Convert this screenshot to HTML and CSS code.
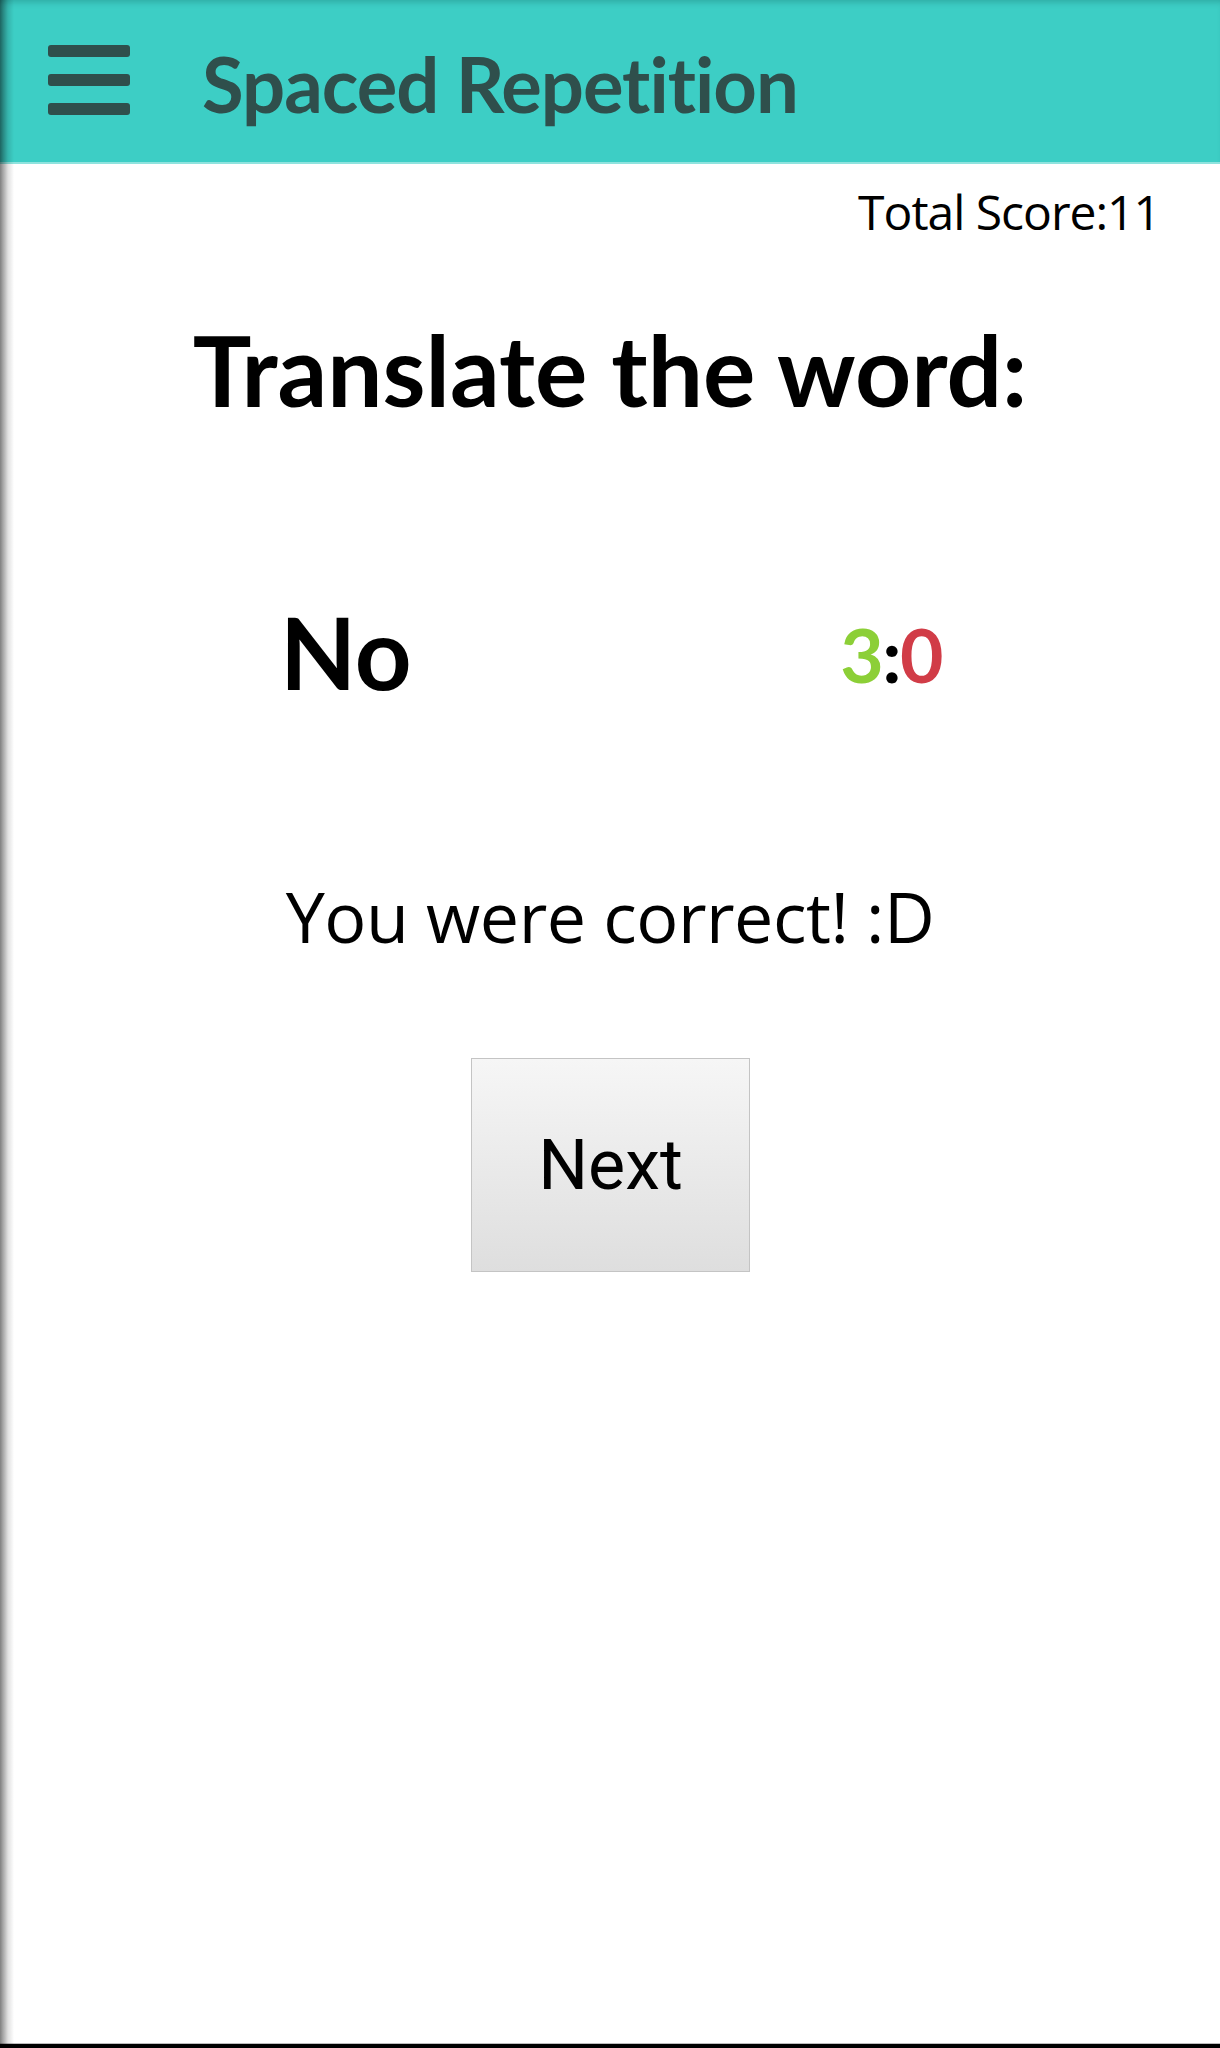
FILE: index.html
```html
<!DOCTYPE html>
<html lang="en">
<head>
<meta charset="utf-8">
<title>Spaced Repetition</title>
<link rel="stylesheet" href="styles.css">
</head>
<body>
<div class="app">
  <header class="topbar">
    <div class="menu-btn" aria-label="Menu">
      <span class="bar"></span>
      <span class="bar"></span>
      <span class="bar"></span>
    </div>
    <h1 class="app-title">Spaced Repetition</h1>
  </header>
  <main class="content">
    <div class="score-row"><span class="total-score">Total Score:11</span></div>
    <h2 class="prompt">Translate the word:</h2>
    <div class="word-row">
      <span class="word">No</span>
      <span class="tally"><span class="tally-good">3</span>:<span class="tally-bad">0</span></span>
    </div>
    <p class="feedback">You were correct! :D</p>
    <div class="actions">
      <button class="next-btn" type="button">Next</button>
    </div>
  </main>
  <div class="bottom-edge"></div>
  <div class="left-shadow"></div>
</div>
</body>
</html>
```

FILE: styles.css
```css
html, body {
  margin: 0;
  padding: 0;
  background: #ffffff;
}

body {
  font-family: "Open Sans", "Noto Sans", "DejaVu Sans", sans-serif;
  color: #000;
}

.app {
  position: relative;
  width: 1220px;
  height: 2048px;
  display: flex;
  flex-direction: column;
  overflow: hidden;
}

.topbar {
  flex: 0 0 auto;
  height: 162px;
  background: #3dcec5;
  border-bottom: 2px solid #8fe3de;
  box-sizing: content-box;
  display: flex;
  align-items: center;
  box-shadow: inset 0 6px 6px -4px rgba(0, 60, 60, 0.25);
}

.menu-btn {
  margin-left: 48px;
  width: 82px;
  display: flex;
  flex-direction: column;
  gap: 17px;
  margin-top: -2px;
}

.bar {
  display: block;
  height: 12px;
  border-radius: 3px;
  background: #2f4f4c;
}

.app-title,
.prompt,
.word,
.tally {
  font-family: Lato, "Open Sans", sans-serif;
  font-weight: 700;
}

.app-title {
  margin: 6px 0 0 72px;
  font-size: 76px;
  line-height: 1;
  letter-spacing: -1px;
  color: #2f4f4c;
}

.content {
  flex: 1 1 auto;
  display: flex;
  flex-direction: column;
}

.score-row {
  display: flex;
  justify-content: flex-end;
  padding: 24px 60px 0 0;
}

.total-score {
  font-size: 48px;
  line-height: 1;
  letter-spacing: -1px;
}

.prompt {
  margin: 84px 0 0 0;
  text-align: center;
  font-size: 98px;
  line-height: 1;
}

.word-row {
  display: flex;
  justify-content: space-between;
  align-items: flex-start;
  padding: 0 278px 0 280px;
  margin-top: 184px;
}

.word {
  font-size: 99px;
  line-height: 1;
}

.tally {
  margin-top: 15px;
  font-size: 75px;
  line-height: 1;
  letter-spacing: -1.5px;
}

.tally-good {
  color: #8ccf37;
}

.tally-bad {
  color: #d13c47;
}

.feedback {
  margin: 180px 0 0 0;
  text-align: center;
  font-size: 70px;
  line-height: 1;
  letter-spacing: -0.5px;
}

.actions {
  display: flex;
  justify-content: center;
  margin-top: 107px;
}

.next-btn {
  width: 279px;
  height: 214px;
  margin-left: 1px;
  border: 1.5px solid #c4c4c4;
  border-radius: 0;
  background: linear-gradient(to bottom, #f6f6f6, #dedede);
  font-family: Roboto, "Noto Sans", sans-serif;
  font-size: 70px;
  color: #000;
  padding: 0;
  display: flex;
  align-items: center;
  justify-content: center;
}

.bottom-edge {
  position: absolute;
  left: 0;
  right: 0;
  bottom: 0;
  height: 4px;
  background: #000;
  border-top: 1px solid #bdbdbd;
}

.left-shadow {
  position: absolute;
  left: 0;
  top: 0;
  bottom: 0;
  width: 14px;
  background: linear-gradient(to right, rgba(0, 0, 0, 0.5) 0px, rgba(0, 0, 0, 0.35) 3px, rgba(0, 0, 0, 0.12) 8px, rgba(0, 0, 0, 0) 14px);
  pointer-events: none;
}
```
